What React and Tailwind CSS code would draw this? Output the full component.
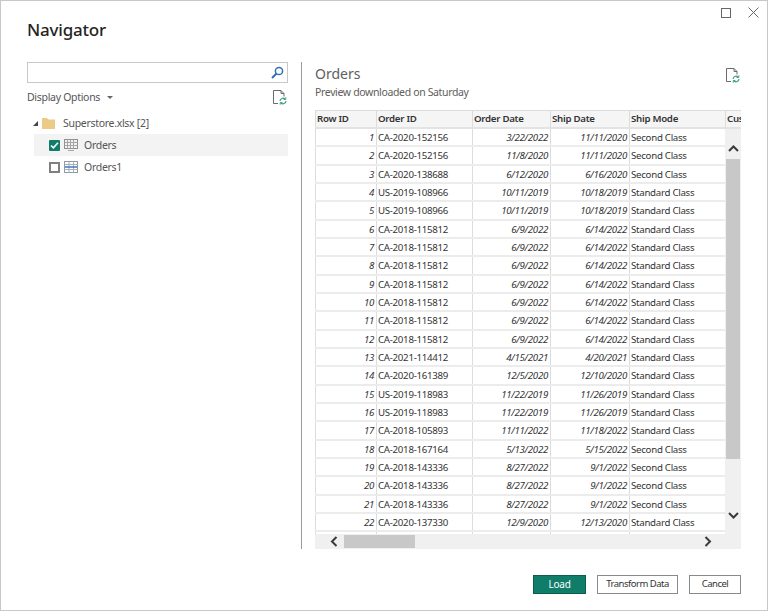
import React from "react";

const rows = [
  ["1","CA-2020-152156","3/22/2022","11/11/2020","Second Class"],
  ["2","CA-2020-152156","11/8/2020","11/11/2020","Second Class"],
  ["3","CA-2020-138688","6/12/2020","6/16/2020","Second Class"],
  ["4","US-2019-108966","10/11/2019","10/18/2019","Standard Class"],
  ["5","US-2019-108966","10/11/2019","10/18/2019","Standard Class"],
  ["6","CA-2018-115812","6/9/2022","6/14/2022","Standard Class"],
  ["7","CA-2018-115812","6/9/2022","6/14/2022","Standard Class"],
  ["8","CA-2018-115812","6/9/2022","6/14/2022","Standard Class"],
  ["9","CA-2018-115812","6/9/2022","6/14/2022","Standard Class"],
  ["10","CA-2018-115812","6/9/2022","6/14/2022","Standard Class"],
  ["11","CA-2018-115812","6/9/2022","6/14/2022","Standard Class"],
  ["12","CA-2018-115812","6/9/2022","6/14/2022","Standard Class"],
  ["13","CA-2021-114412","4/15/2021","4/20/2021","Standard Class"],
  ["14","CA-2020-161389","12/5/2020","12/10/2020","Standard Class"],
  ["15","US-2019-118983","11/22/2019","11/26/2019","Standard Class"],
  ["16","US-2019-118983","11/22/2019","11/26/2019","Standard Class"],
  ["17","CA-2018-105893","11/11/2022","11/18/2022","Standard Class"],
  ["18","CA-2018-167164","5/13/2022","5/15/2022","Second Class"],
  ["19","CA-2018-143336","8/27/2022","9/1/2022","Second Class"],
  ["20","CA-2018-143336","8/27/2022","9/1/2022","Second Class"],
  ["21","CA-2018-143336","8/27/2022","9/1/2022","Second Class"],
  ["22","CA-2020-137330","12/9/2020","12/13/2020","Standard Class"],
  ["","","","",""],
];

function RefreshDoc() {
  return (
    <svg width="14" height="15" viewBox="0 0 14 15" fill="none">
      <path d="M8 .5H.5v13H5M8 .5l3 3v3M8 .5v3h3" stroke="#6b6b6b" strokeWidth="1" />
      <path d="M7 11a3 3 0 0 1 5-2M13 11a3 3 0 0 1-5 2" stroke="#3fa07f" strokeWidth="1.2" />
      <path d="M12.8 7.3v2.2h-2.2M7.2 14.7v-2.2h2.2" stroke="#3fa07f" strokeWidth="1" />
    </svg>
  );
}

function TableIcon({ blue }) {
  return blue ? (
    <svg width="14" height="12" viewBox="0 0 14 12" fill="none">
      <rect x=".5" y=".5" width="13" height="11" stroke="#8f98a3" />
      <path d="M.5 3.500h13M.5 8.500h13M5 .5v11M9.500 .5v11" stroke="#a3b0bf" />
      <path d="M1 6h12" stroke="#3f78b8" strokeWidth="1.500" />
    </svg>
  ) : (
    <svg width="14" height="12" viewBox="0 0 14 12" fill="none">
      <rect x=".5" y=".5" width="13" height="9" stroke="#909090" />
      <path d="M.5 3.500h13M.5 6.500h13M3.500 .5v9M6.500 .5v9M9.500 .5v9M4 11.500h6" stroke="#a5a5a5" />
    </svg>
  );
}

function Chevron({ d }) {
  return (
    <svg width="11" height="11" viewBox="0 0 11 11" fill="none">
      <path d={d} stroke="#3a3a3a" strokeWidth="2" />
    </svg>
  );
}

const cols = ["w-[61px]", "w-[96px]", "w-[78px]", "w-[79px]", "w-[96px]"];

export default function App() {
  return (
    <div className="w-[768px] h-[611px] flex flex-col border border-[#c8c8c8] bg-white text-[#333] overflow-hidden" style={{ fontFamily: '"Noto Sans", sans-serif' }}>
      <div className="h-[51px] shrink-0 flex items-start">
        <h1 className="ml-[26px] mt-[17px] text-[17px] tracking-[-0.2px] leading-6 font-medium text-[#252423]">Navigator</h1>
        <div className="ml-auto mr-[8px] mt-[6px] flex items-center gap-[17px]">
          <div className="w-[10px] h-[10px] border border-[#666]" />
          <svg width="11" height="11" viewBox="0 0 11 11"><path d="M.5 .5l10 10M10.500 .5l-10 10" stroke="#666" strokeWidth="1" /></svg>
        </div>
      </div>
      <div className="flex h-[497px] shrink-0">
        <div className="w-[300px] shrink-0 pl-[26px] pr-[13px] pt-[10px] text-[10.5px] tracking-[-0.3px] text-[#555]">
          <div className="h-[21px] border border-[#c8c8c8] flex items-center justify-end pr-[3px]">
            <svg width="13" height="13" viewBox="0 0 13 13" fill="none">
              <circle cx="8" cy="5" r="3.6" stroke="#2f6fb5" strokeWidth="1.5" />
              <path d="M5.500 7.500L1 12" stroke="#2f6fb5" strokeWidth="2" />
            </svg>
          </div>
          <div className="flex items-center justify-between mt-[4px] h-[21px] pr-[1px]">
            <span className="flex items-center">
              Display Options
              <span className="ml-[7px] border-x-[3px] border-x-transparent border-t-[3px] border-t-[#666]" />
            </span>
            <RefreshDoc />
          </div>
          <div className="mt-[4px] ml-[7px]">
            <div className="h-[22px] flex items-center -ml-[1px]">
              <span className="w-0 h-0 border-l-[5px] border-l-transparent border-b-[5px] border-b-[#444]" />
              <svg className="ml-[4px]" width="13" height="12" viewBox="0 0 13 12"><path d="M0 1h5l1.500 1.500H13V12H0z" fill="#eccb87" /></svg>
              <span className="ml-[8px] pt-[2px]">Superstore.xlsx [2]</span>
            </div>
            <div className="h-[22px] flex items-center bg-[#f3f3f3]">
              <span className="ml-[15px] w-[11px] h-[11px] rounded-[1px] bg-[#107c6a] flex items-center justify-center">
                <svg width="9" height="9" viewBox="0 0 9 9" fill="none"><path d="M1 4.500l2.400 2.400L8 1.800" stroke="#fff" strokeWidth="1.600" /></svg>
              </span>
              <span className="ml-[4px]"><TableIcon /></span>
              <span className="ml-[6px] pt-[2px]">Orders</span>
            </div>
            <div className="h-[22px] flex items-center">
              <span className="ml-[15px] w-[11px] h-[11px] border-2 border-[#808080]" />
              <span className="ml-[4px]"><TableIcon blue /></span>
              <span className="ml-[6px] pt-[2px]">Orders1</span>
            </div>
          </div>
        </div>
        <div className="flex-1 mt-[10px] pl-[13px] min-w-0 border-l border-[#9a9a9a]">
          <div className="flex justify-between w-[426px] h-[48px] pr-[1px]">
            <div>
              <div className="text-[14px] leading-5 mt-[2px] text-[#605e5c]">Orders</div>
              <div className="text-[10.5px] tracking-[-0.35px] leading-4 text-[#605e5c]">Preview downloaded on Saturday</div>
            </div>
            <div className="mt-[6px]"><RefreshDoc /></div>
          </div>
          <div className="w-[426px] h-[439px] flex flex-col border-t border-[#dcdcdc] text-[9.7px] tracking-[-0.28px] text-[#333]">
            <div className="flex h-[18px] shrink-0 bg-[#f5f5f5] border-b-[2px] border-[#e3e3e3] font-semibold overflow-hidden">
              {["Row ID","Order ID","Order Date","Ship Date","Ship Mode"].map((h, i) => (
                <div key={h} className={`${cols[i]} shrink-0 pl-[1px] border-l border-[#dcdcdc] leading-[16px] whitespace-nowrap`}>{h}</div>
              ))}
              <div className="flex-1 pl-[1px] border-l border-[#dcdcdc] leading-[16px]">Cus</div>
            </div>
            <div className="flex h-[405px] shrink-0">
              <div className="w-[410px] overflow-hidden shrink-0">
                {rows.map((r, i) => (
                  <div key={i} className="flex h-[18.33px] border-b-[2px] border-[#ececec] leading-[18px]">
                    <div className={`${cols[0]} shrink-0 pr-[2px] border-l border-[#dcdcdc] text-right italic`}>{r[0]}</div>
                    <div className={`${cols[1]} shrink-0 pl-[1px] border-l border-[#dcdcdc]`}>{r[1]}</div>
                    <div className={`${cols[2]} shrink-0 pr-[2px] border-l border-[#dcdcdc] text-right italic`}>{r[2]}</div>
                    <div className={`${cols[3]} shrink-0 pr-[2px] border-l border-[#dcdcdc] text-right italic`}>{r[3]}</div>
                    <div className={`${cols[4]} shrink-0 pl-[1px] border-l border-[#dcdcdc]`}>{r[4]}</div>
                  </div>
                ))}
              </div>
              <div className="w-[16px] bg-[#f0f0f0] flex flex-col items-center pt-[14px]">
                <Chevron d="M1 8l4.500-4.500L10 8" />
                <div className="w-[14px] h-[300px] bg-[#c8c8c8] mt-[5px]" />
                <div className="mt-[51px]"><Chevron d="M1 3l4.500 4.500L10 3" /></div>
              </div>
            </div>
            <div className="h-[15px] shrink-0 bg-[#f0f0f0] flex items-center">
              <div className="ml-[14px]"><Chevron d="M7.500 1L3 5.500 7.500 10" /></div>
              <div className="ml-[4px] w-[71px] h-[13px] bg-[#c8c8c8]" />
              <div className="ml-[287px]"><Chevron d="M3.500 1L8 5.500 3.500 10" /></div>
            </div>
          </div>
        </div>
      </div>
      <div className="flex-1 flex justify-end items-start gap-[11px] pt-[26px] pr-[26px] text-[9.5px] tracking-[-0.5px]">
        <button className="w-[53px] h-[19px] bg-[#107c6a] border border-[#0b5d50] text-white whitespace-nowrap text-[10px] tracking-[-0.2px]">Load</button>
        <button className="w-[81px] h-[19px] border border-[#8a8a8a] whitespace-nowrap">Transform Data</button>
        <button className="w-[52px] h-[19px] border border-[#8a8a8a] whitespace-nowrap">Cancel</button>
      </div>
    </div>
  );
}
